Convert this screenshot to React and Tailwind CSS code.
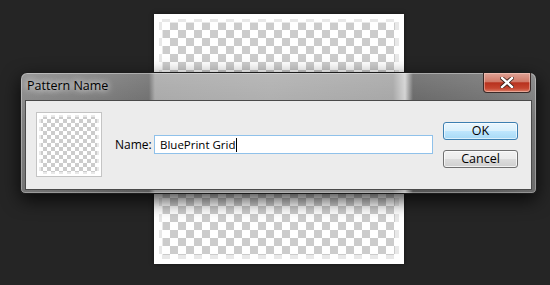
import React from 'react';

// Checkerboard used for transparent pixels
const checker8 = 'bg-[conic-gradient(#cccccc_25%,#ffffff_0_50%,#cccccc_0_75%,#ffffff_0)] bg-[length:16px_16px]';
const checker4 = 'bg-[conic-gradient(#cccccc_25%,#ffffff_0_50%,#cccccc_0_75%,#ffffff_0)] bg-[length:8px_8px]';

const font = { fontFamily: '"Open Sans", "Noto Sans", sans-serif' };

const CloseButton = () => (
  <div className="absolute top-0 right-[5px] w-[48px] h-[20px] rounded-b-[4px] border border-t-0 border-[#3a2a28] bg-[linear-gradient(to_bottom,#e0a396_0%,#d07a68_45%,#b8321e_52%,#c5452f_80%,#d9806a_100%)] shadow-[inset_0_0_0_1px_rgba(255,220,210,0.45)] flex items-center justify-center">
    <svg width="14" height="11" viewBox="0 0 14 11">
      <path d="M2 1 L12 10 M12 1 L2 10" stroke="#3b1d16" strokeWidth="4" strokeLinecap="square" />
      <path d="M2 1 L12 10 M12 1 L2 10" stroke="#ffffff" strokeWidth="2.4" strokeLinecap="square" />
    </svg>
  </div>
);

const App = () => {
  return (
    <div className="relative w-[550px] h-[285px] bg-[#252525] overflow-hidden" style={font}>
      {/* Canvas with transparent layer */}
      <div className={`absolute left-[154px] top-[14px] w-[250px] h-[250px] ${checker8} shadow-[0_0_4px_rgba(0,0,0,0.5)]`}>
        <div className="w-full h-full border-[5px] border-white">
          <div className="w-full h-full border-[4px] border-white/55" />
        </div>
      </div>

      {/* Dialog window */}
      <div className="absolute left-[20px] top-[72px] w-[517px] h-[122px] rounded-t-[7px] rounded-b-[5px] border border-[#1c1c1c] bg-[linear-gradient(to_right,#828282_0,#767676_60px,#666666_128px,#a3a3a3_134px,#a9a9a9_250px,#a0a0a0_372px,#d0d0d0_384px,#5e5e5e_392px,#6a6a6a_470px,#777777_100%)] shadow-[0_6px_18px_rgba(0,0,0,0.75),inset_0_0_0_1px_rgba(255,255,255,0.35)]">
        <div className="absolute inset-0 rounded-t-[7px] bg-[linear-gradient(to_bottom,rgba(255,255,255,0.18),rgba(255,255,255,0)_40%,rgba(0,0,0,0.1))]" />
        <div className="relative h-[27px] pl-[6px] pt-[4px] text-[12.5px] text-black [text-shadow:0_0_6px_rgba(255,255,255,0.9),0_0_10px_rgba(255,255,255,0.6)]">
          Pattern Name
        </div>
        <CloseButton />

        {/* Client area */}
        <div className="relative mx-[4px] h-[90px] border border-[#4a4a4a] bg-[#ececec] flex items-start text-[12px] text-black">
          <div className="mt-[11px] ml-[10px] w-[66px] h-[65px] border border-[#c4c4c4] bg-white p-[2px]">
            <div className={`w-full h-full ${checker4}`}>
              <div className="w-full h-full border-[2px] border-white/55" />
            </div>
          </div>

          <div className="mt-[34px] ml-[13px] flex items-center">
            <span className="w-[39px]">Name:</span>
            <div className="w-[279px] h-[19px] border border-[#8fc1ea] bg-white flex items-center pl-[5px] text-[11.5px]">
              BluePrint Grid
              <span className="inline-block w-px h-[14px] bg-black" />
            </div>
          </div>

          <div className="mt-[21px] ml-[10px] flex flex-col gap-[10px]">
            <button className="w-[75px] h-[18px] rounded-[3px] border border-[#3c7fb1] bg-[linear-gradient(to_bottom,#eaf6fd_0%,#d9f0fc_50%,#bee6fd_51%,#a7d9f5_100%)] shadow-[inset_0_0_0_1px_rgba(255,255,255,0.6)] text-[12.5px] leading-none flex items-center justify-center">
              OK
            </button>
            <button className="w-[75px] h-[18px] rounded-[3px] border border-[#707070] bg-[linear-gradient(to_bottom,#f2f2f2_0%,#ebebeb_50%,#dddddd_51%,#cfcfcf_100%)] shadow-[inset_0_0_0_1px_rgba(255,255,255,0.7)] text-[12.5px] leading-none flex items-center justify-center">
              Cancel
            </button>
          </div>
        </div>
      </div>
    </div>
  );
};

export default App;
